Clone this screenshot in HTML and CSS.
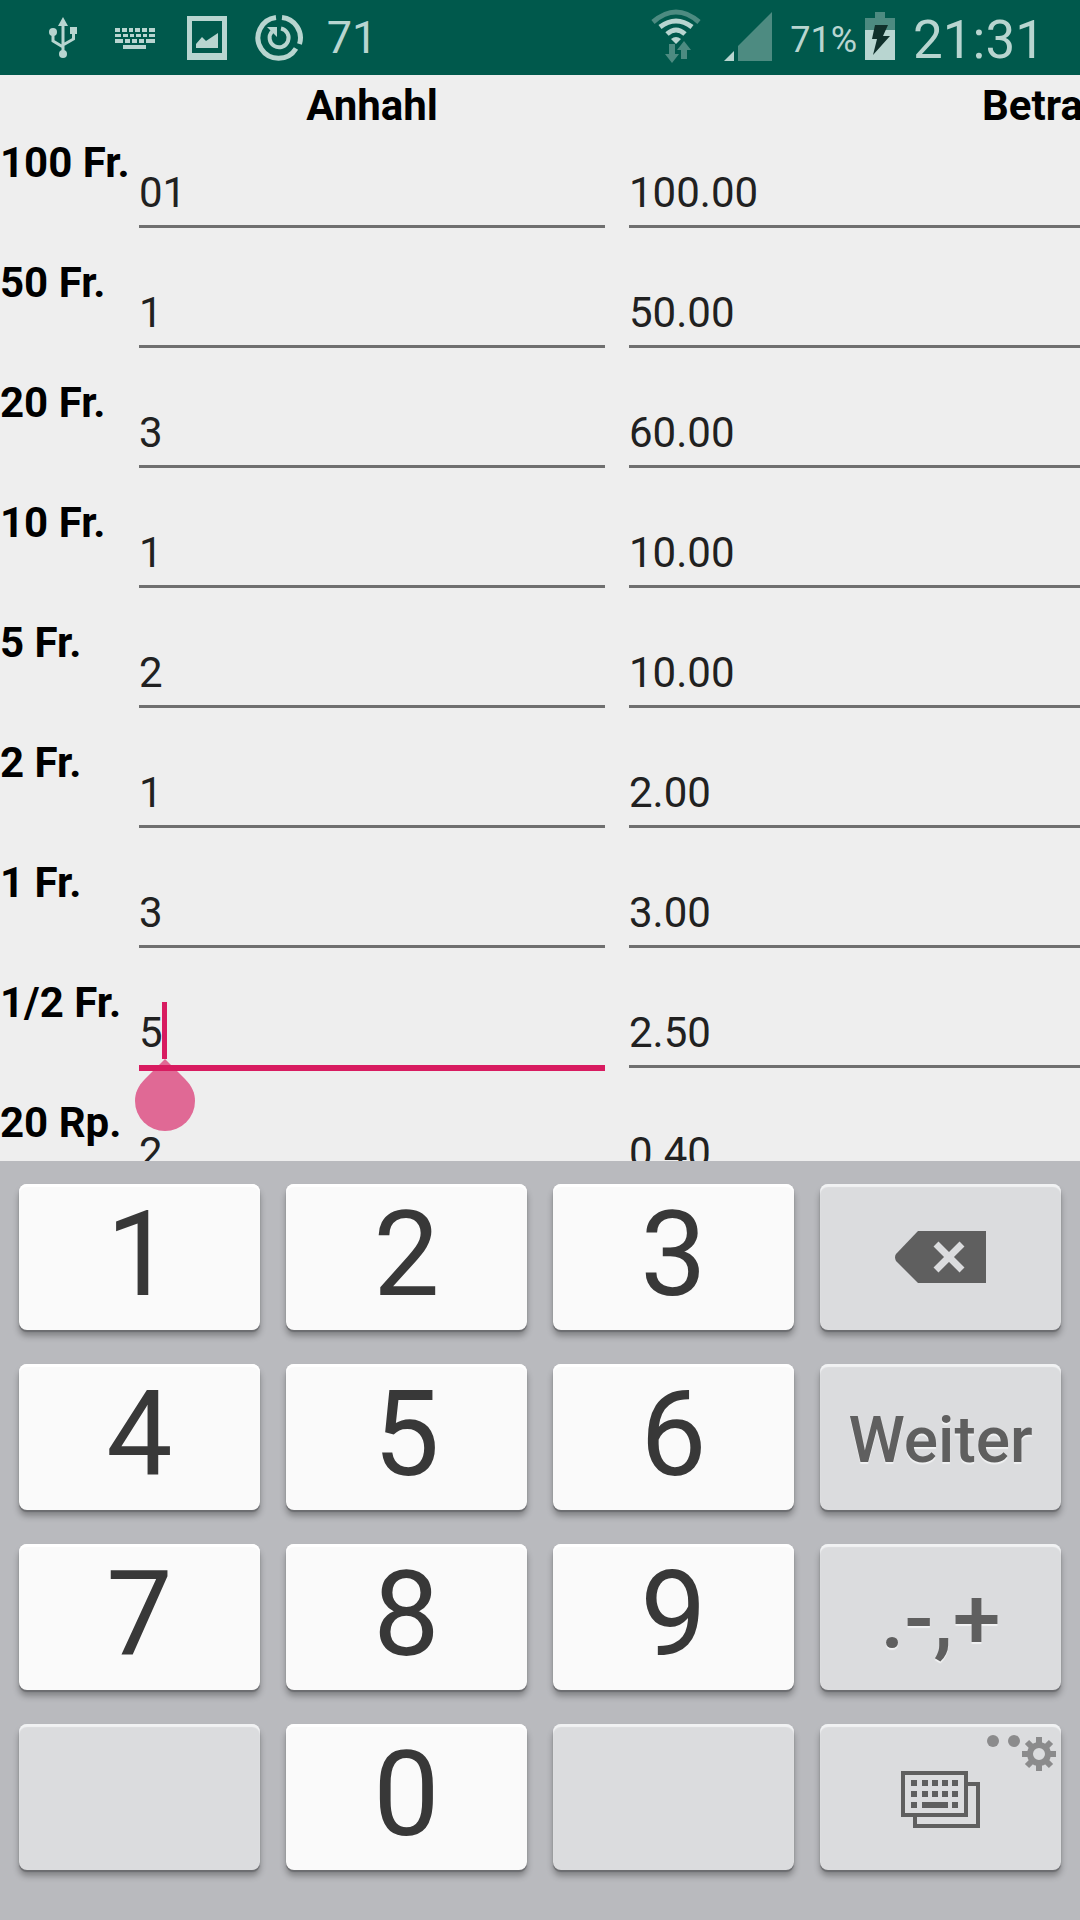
FILE: index.html
```html
<!DOCTYPE html>
<html lang="de">
<head>
    <meta charset="UTF-8">
    <title>Kasse</title>
    <meta name="viewport" content="width=device-width, initial-scale=1">
    <link rel="stylesheet" href="styles.css">
</head>
<body>
    <header class="status-bar">
        <div class="status-group">
            <!-- USB -->
            <svg class="status-icon" viewBox="0 0 72 75">
                <g fill="none" stroke="#b8d5d0" stroke-width="3">
                    <path d="M36 22V52M26 33V41L36 47M46.500 31V39L36 45"/>
                </g>
                <path d="M36 17l5 9H31zM43 27h7v7h-7z" fill="#b8d5d0"/>
                <circle cx="26" cy="32" r="4" fill="#b8d5d0"/>
                <circle cx="36" cy="54" r="4" fill="#b8d5d0"/>
            </svg>
            <!-- Tastatur -->
            <svg class="status-icon" viewBox="0 0 72 75">
                <path d="M16 28h5v4h-5zM23 28h5v4h-5zM30 28h4v4h-4zM36 28h5v4h-5zM43 28h5v4h-5zM50 28h6v4h-6zM16 34h6v3h-6zM24 34h5v3h-5zM31 34h4v3h-4zM37 34h5v3h-5zM44 34h4v3h-4zM50 34h6v3h-6zM16 39h8v4h-8zM26 39h5v4h-5zM33 39h5v4h-5zM40 39h5v4h-5zM47 39h9v4h-9zM24 45h23v4H24z" fill="#b8d5d0"/>
            </svg>
            <!-- Bild -->
            <svg class="status-icon" viewBox="0 0 72 75">
                <path fill-rule="evenodd" d="M16 16h40v44H16zM21 21v32h30V21z" fill="#b8d5d0"/>
                <path d="M25 44l6-7 4 4 12-8v15H25z" fill="#b8d5d0"/>
            </svg>
            <!-- Sync -->
            <svg class="status-icon" viewBox="0 0 72 75">
                <g fill="none" stroke="#b8d5d0">
                    <path d="M33 17.500A20.500 20.500 0 1 0 53 48.500M39 17.500A20.500 20.500 0 0 1 56.500 44" stroke-width="5"/>
                    <path d="M38 28.500A9.500 9.500 0 1 1 29 31.500" stroke-width="4"/>
                </g>
                <path d="M24 27h10v10z" fill="#b8d5d0"/>
            </svg>
            <span class="status-count">71</span>
        </div>
        <div class="status-group">
            <!-- WLAN -->
            <svg class="status-icon" viewBox="0 0 72 75">
                <path d="M13 22Q36 2 59 22" fill="none" stroke="#4d8b81" stroke-width="5"/>
                <g fill="none" stroke="#b8d5d0" stroke-width="5">
                    <path d="M20 27Q36 15 52 27M27 34Q36 26 45 34"/>
                </g>
                <path d="M31 39q5-4 10 0l-5 5z" fill="#b8d5d0"/>
                <path d="M29 44h6v10h4l-7 9-7-9h4zM41 59V50h-4l7-9 7 9h-4v9z" fill="#4d8b81"/>
            </svg>
            <!-- Signal -->
            <svg class="status-icon" viewBox="0 0 72 75">
                <path d="M60 12v49H26V46z" fill="#4d8b81"/>
                <path d="M22 51v10H12z" fill="#b8d5d0"/>
            </svg>
            <span class="status-percent">71%</span>
            <!-- Akku -->
            <svg class="battery-icon" viewBox="0 0 30 75">
                <path d="M10 12h10v6h10v12H0V18h10z" fill="#4d8b81"/>
                <path d="M0 30h30v30H0z" fill="#b8d5d0"/>
                <path d="M10 25h13l-5 11h7L8 55l4-16H7z" fill="#10302b"/>
            </svg>
            <span class="status-clock">21:31</span>
        </div>
    </header>

    <main class="form-container">
        <table class="cash-table">
            <colgroup>
                <col class="col-label">
                <col class="col-count">
                <col class="col-amount">
            </colgroup>
            <thead>
                <tr>
                    <td></td>
                    <th id="anzahl">Anhahl</th>
                    <th id="betrag">Betrag</th>
                </tr>
            </thead>
            <tbody>
                <tr>
                    <th><label for="n100">100 Fr.</label></th>
                    <td><input type="text" id="n100" value="01"></td>
                    <td><input type="text" aria-labelledby="betrag" value="100.00"></td>
                </tr>
                <tr>
                    <th><label for="n50">50 Fr.</label></th>
                    <td><input type="text" id="n50" value="1"></td>
                    <td><input type="text" aria-labelledby="betrag" value="50.00"></td>
                </tr>
                <tr>
                    <th><label for="n20">20 Fr.</label></th>
                    <td><input type="text" id="n20" value="3"></td>
                    <td><input type="text" aria-labelledby="betrag" value="60.00"></td>
                </tr>
                <tr>
                    <th><label for="n10">10 Fr.</label></th>
                    <td><input type="text" id="n10" value="1"></td>
                    <td><input type="text" aria-labelledby="betrag" value="10.00"></td>
                </tr>
                <tr>
                    <th><label for="n5">5 Fr.</label></th>
                    <td><input type="text" id="n5" value="2"></td>
                    <td><input type="text" aria-labelledby="betrag" value="10.00"></td>
                </tr>
                <tr>
                    <th><label for="n2">2 Fr.</label></th>
                    <td><input type="text" id="n2" value="1"></td>
                    <td><input type="text" aria-labelledby="betrag" value="2.00"></td>
                </tr>
                <tr>
                    <th><label for="n1">1 Fr.</label></th>
                    <td><input type="text" id="n1" value="3"></td>
                    <td><input type="text" aria-labelledby="betrag" value="3.00"></td>
                </tr>
                <tr>
                    <th><label for="n05">1/2 Fr.</label></th>
                    <td class="active-cell">
                        <input type="text" id="n05" class="active" value="5">
                        <span class="cursor"></span>
                        <svg class="cursor-handle" viewBox="0 0 60 72">
                            <path d="M30 0L50 20C57 27 60 34 60 42A30 30 0 0 1 0 42C0 34 3 27 10 20z" fill="#d81b60" fill-opacity="0.63"/>
                        </svg>
                    </td>
                    <td><input type="text" aria-labelledby="betrag" value="2.50"></td>
                </tr>
                <tr>
                    <th><label for="r20">20 Rp.</label></th>
                    <td><input type="text" id="r20" value="2"></td>
                    <td><input type="text" aria-labelledby="betrag" value="0.40"></td>
                </tr>
            </tbody>
        </table>
    </main>

    <div class="keyboard">
        <button class="key">1</button>
        <button class="key">2</button>
        <button class="key">3</button>
        <button class="key key-function" aria-label="Löschen">
            <svg width="91" height="52" viewBox="0 0 91 52">
                <path d="M23 0h68v52H23L1 30q-2-4 0-7z" fill="#5f5f5f"/>
                <path d="M41 13l26 26M67 13L41 39" stroke="#dbdcde" stroke-width="7"/>
            </svg>
        </button>
        <button class="key">4</button>
        <button class="key">5</button>
        <button class="key">6</button>
        <button class="key key-function key-next">Weiter</button>
        <button class="key">7</button>
        <button class="key">8</button>
        <button class="key">9</button>
        <button class="key key-function key-symbols">.-,+</button>
        <button class="key key-function" aria-label="Leer"></button>
        <button class="key">0</button>
        <button class="key key-function" aria-label="Leer"></button>
        <button class="key key-function key-layout" aria-label="Tastatur wechseln">
            <svg width="79" height="57" viewBox="0 0 79 57">
                <path d="M2 2h63v42H2zM67 13h10v42H14V46" fill="none" stroke="#5f5f5f" stroke-width="4"/>
                <path d="M10 9h6v6h-6zM21 9h6v6h-6zM31 9h6v6h-6zM41 9h6v6h-6zM51 9h6v6h-6zM10 20h6v6h-6zM21 20h6v6h-6zM31 20h6v6h-6zM41 20h6v6h-6zM51 20h6v6h-6zM10 31h6v6h-6zM21 31h26v6H21zM51 31h6v6h-6z" fill="#5f5f5f"/>
            </svg>
            <svg class="key-hint" width="70" height="36" viewBox="0 0 70 36">
                <g fill="#8b8b8c">
                    <circle cx="7" cy="6" r="6"/>
                    <circle cx="28" cy="6" r="6"/>
                </g>
                <circle cx="53" cy="19" r="9" fill="none" stroke="#8b8b8c" stroke-width="6"/>
                <path d="M53 2v7M53 29v7M36 19h7M63 19h7M41 7l5 5M60 26l5 5M65 7l-5 5M46 26l-5 5" stroke="#8b8b8c" stroke-width="6"/>
            </svg>
        </button>
    </div>
</body>
</html>
```
FILE: styles.css
```css
* {
    box-sizing: border-box;
}
body {
    margin: 0;
    height: 100vh;
    display: flex;
    flex-direction: column;
    overflow: hidden;
    background: #eeeeee;
    font-family: Roboto, sans-serif;
}

/* Statusleiste */
.status-bar {
    display: flex;
    justify-content: space-between;
    height: 75px;
    padding: 0 35px 0 27px;
    background: #00594c;
    color: #b8d5d0;
    flex-shrink: 0;
}
.status-group {
    display: flex;
    align-items: center;
    height: 75px;
}
.status-icon {
    width: 72px;
    height: 75px;
}
.battery-icon {
    width: 30px;
    height: 75px;
    margin: 0 18px 0 8px;
}
.status-count {
    width: 72px;
    padding-left: 2px;
    font-size: 45px;
    text-align: center;
}
.status-percent {
    padding-left: 6px;
    padding-top: 4px;
    font-size: 36px;
}
.status-clock {
    padding-top: 4px;
    font-size: 53px;
}

/* Tabelle mit den Eingabefeldern */
.form-container {
    flex: 1;
    min-height: 0;
    overflow: hidden;
}
.cash-table {
    width: 1472px;
    table-layout: fixed;
    border-collapse: collapse;
    font-size: 42px;
    line-height: 49px;
}
.col-label {
    width: 127px;
}
.col-count {
    width: 490px;
}
.cash-table th,
.cash-table td {
    padding: 0;
    vertical-align: top;
}
.cash-table th {
    padding: 6px 0 2px;
    color: #000;
    font-weight: bold;
    white-space: nowrap;
}
.cash-table tbody tr {
    height: 120px;
}
.cash-table tbody th {
    text-align: left;
}
.cash-table tbody td {
    padding: 0 12px;
}
.cash-table input {
    display: block;
    width: 100%;
    height: 96px;
    padding: 36px 0 8px;
    border: none;
    border-bottom: 3px solid #6f6f6f;
    border-radius: 0;
    outline: none;
    background: transparent;
    color: #212121;
    font: inherit;
}
.cash-table input.active {
    height: 99px;
    border-bottom: 6px solid #d81b60;
}
.active-cell {
    position: relative;
}
.cursor {
    position: absolute;
    left: 35px;
    top: 30px;
    width: 5px;
    height: 57px;
    background: #d81b60;
}
.cursor-handle {
    position: absolute;
    left: 8px;
    top: 87px;
    width: 60px;
    height: 72px;
}

/* Zifferntastatur */
.keyboard {
    display: grid;
    grid-template-columns: repeat(4, 1fr);
    gap: 34px 26px;
    padding: 23px 19px 50px;
    background: #b9babe;
    flex-shrink: 0;
}
.key {
    position: relative;
    display: flex;
    align-items: center;
    justify-content: center;
    height: 146px;
    padding: 0 0 4px;
    border: none;
    border-radius: 8px;
    background: #fafafa;
    box-shadow: inset 0 3px 1px #fff, 0 2px 1px #6c6d70, 0 6px 6px rgba(0, 0, 0, 0.3);
    color: #383838;
    font-family: Roboto, sans-serif;
    font-size: 118px;
    font-weight: 400;
    line-height: 138px;
}
.key-function {
    padding: 0;
    background: #dbdcde;
    box-shadow: inset 0 3px 1px #f1f2f3, 0 2px 1px #6c6d70, 0 6px 6px rgba(0, 0, 0, 0.3);
    color: #5f5f5f;
    font-weight: 500;
    text-shadow: 0 2px 1px #f1f2f3;
}
.key-next {
    padding-top: 8px;
    font-size: 64px;
}
.key-symbols {
    padding-top: 4px;
    font-size: 86px;
}
.key-layout {
    padding-top: 4px;
}
.key-hint {
    position: absolute;
    top: 11px;
    right: 5px;
}
```
